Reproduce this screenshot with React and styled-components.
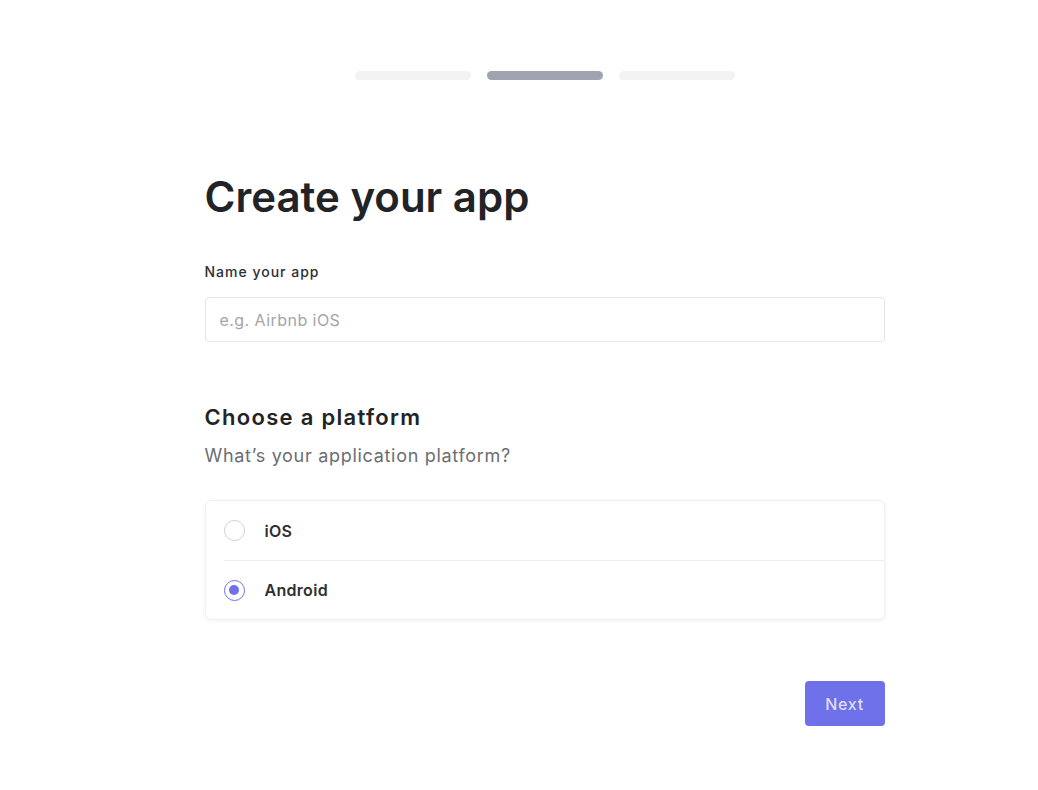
import React from 'react';
import styled, { createGlobalStyle } from 'styled-components';

const colors = {
  text: '#222326',
  label: '#2e2f33',
  muted: '#6b6d73',
  placeholder: '#a3a5ab',
  border: '#e4e5e8',
  divider: '#eeeef0',
  track: '#f2f3f5',
  trackActive: '#a0a4b0',
  accent: '#6e71e9',
};

const GlobalStyle = createGlobalStyle`
  html, body {
    margin: 0;
    padding: 0;
    background: #fff;
    font-family: Inter, "Noto Sans", sans-serif;
  }
  * { box-sizing: border-box; }
`;

const Page = styled.div`
  display: flex;
  flex-direction: column;
  align-items: center;
  padding: 71px 0 0 51px;
  min-height: 790px;
`;

const Steps = styled.div`
  display: flex;
  gap: 16px;
`;

const Step = styled.div`
  width: 116px;
  height: 9px;
  border-radius: 5px;
  background: ${(p) => (p.active ? colors.trackActive : colors.track)};
`;

const Form = styled.div`
  width: 680px;
  margin-top: 91px;
  display: flex;
  flex-direction: column;
`;

const Title = styled.h1`
  margin: 0;
  font-size: 42px;
  font-weight: 600;
  color: ${colors.text};
  line-height: 52px;
`;

const Label = styled.label`
  margin-top: 39px;
  font-size: 14px;
  font-weight: 500;
  letter-spacing: 1px;
  color: ${colors.label};
  line-height: 20px;
`;

const Input = styled.input`
  margin-top: 15px;
  height: 45px;
  border: 1px solid ${colors.border};
  border-radius: 4px;
  padding: 0 14px;
  font: inherit;
  font-size: 16px;
  letter-spacing: 0.45px;
  color: ${colors.text};
  outline: none;
  &::placeholder {
    color: ${colors.placeholder};
  }
`;

const Heading = styled.h2`
  margin: 61px 0 0;
  font-size: 22px;
  font-weight: 600;
  letter-spacing: 1.3px;
  color: ${colors.text};
  line-height: 28px;
`;

const Sub = styled.p`
  margin: 13px 0 0;
  font-size: 18px;
  letter-spacing: 0.7px;
  color: ${colors.muted};
  line-height: 24px;
`;

const Card = styled.div`
  margin-top: 32px;
  border: 1px solid #f0f0f2;
  border-radius: 6px;
  box-shadow: 0 1px 4px rgba(0, 0, 0, 0.05);
  padding-left: 18px;
`;

const Option = styled.label`
  display: flex;
  align-items: center;
  gap: 20px;
  height: 59px;
  cursor: pointer;
  & + & {
    border-top: 1px solid ${colors.divider};
  }
`;

const Radio = styled.span`
  width: 21px;
  height: 21px;
  border-radius: 50%;
  border: 1.5px solid ${(p) => (p.checked ? colors.accent : '#cfd0d4')};
  display: flex;
  align-items: center;
  justify-content: center;
  &::after {
    content: '';
    width: 10px;
    height: 10px;
    border-radius: 50%;
    background: ${colors.accent};
    display: ${(p) => (p.checked ? 'block' : 'none')};
  }
`;

const OptionText = styled.span`
  font-size: 16px;
  font-weight: 600;
  letter-spacing: 0.3px;
  color: ${colors.label};
`;

const Footer = styled.div`
  display: flex;
  justify-content: flex-end;
  margin-top: 61px;
`;

const Button = styled.button`
  width: 80px;
  height: 45px;
  border: none;
  border-radius: 4px;
  background: ${colors.accent};
  color: rgba(255, 255, 255, 0.78);
  font: inherit;
  font-size: 16px;
  font-weight: 500;
  letter-spacing: 0.7px;
`;

const platforms = ['iOS', 'Android'];

const App = () => {
  const [platform, setPlatform] = React.useState('Android');
  return (
    <Page>
      <GlobalStyle />
      <Steps>
        <Step />
        <Step active />
        <Step />
      </Steps>
      <Form>
        <Title>Create your app</Title>
        <Label>Name your app</Label>
        <Input placeholder="e.g. Airbnb iOS" />
        <Heading>Choose a platform</Heading>
        <Sub>What’s your application platform?</Sub>
        <Card>
          {platforms.map((name) => (
            <Option key={name} onClick={() => setPlatform(name)}>
              <Radio checked={platform === name} />
              <OptionText>{name}</OptionText>
            </Option>
          ))}
        </Card>
        <Footer>
          <Button>Next</Button>
        </Footer>
      </Form>
    </Page>
  );
};

export default App;
